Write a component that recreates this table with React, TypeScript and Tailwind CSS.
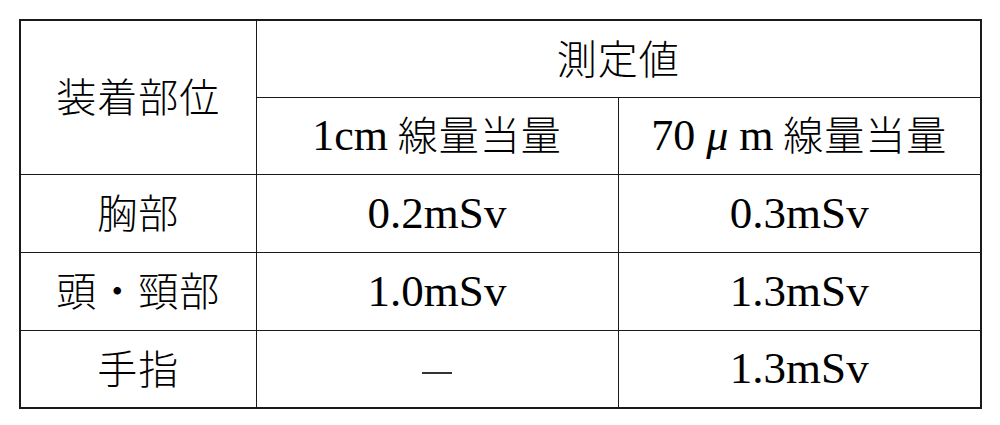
const serif = "font-['Liberation_Serif','Noto_Sans_CJK_JP',serif]";
const jp = "font-['Noto_Sans_CJK_JP',sans-serif] font-light tracking-[1px]";

const rows = [
  { part: "胸部", cm: "0.2mSv", um: "0.3mSv" },
  { part: "頭・頸部", cm: "1.0mSv", um: "1.3mSv" },
  { part: "手指", cm: "", um: "1.3mSv" },
];

export default function App() {
  const cell = "border-[1.5px] border-[#1a1a1a] text-center align-middle p-0 font-normal";
  return (
    <div className={`w-[1000px] h-[425px] bg-white pt-[19px] pl-[19px] text-black ${serif}`}>
      <table className="border-collapse border-2 border-[#1a1a1a] table-fixed w-[961px] text-[40px] leading-none">
        <colgroup>
          <col className="w-[236px]" />
          <col className="w-[362px]" />
          <col className="w-[363px]" />
        </colgroup>
        <thead>
          <tr className="h-[77px]">
            <th rowSpan={2} className={cell}>
              <span className={jp}>装着部位</span>
            </th>
            <th colSpan={2} className={cell}>
              <span className={jp}>測定値</span>
            </th>
          </tr>
          <tr className="h-[77px]">
            <th className={cell}>
              <span className="text-[44px]">1cm</span>
              <span className={jp}> 線量当量</span>
            </th>
            <th className={cell}>
              <span className="text-[44px]">70</span>
              <span className="text-[44px] italic"> μ </span>
              <span className="text-[44px]">m</span>
              <span className={jp}> 線量当量</span>
            </th>
          </tr>
        </thead>
        <tbody>
          {rows.map((r) => (
            <tr key={r.part} className="h-[78px]">
              <td className={cell}>
                <span className={jp}>{r.part}</span>
              </td>
              <td className={`${cell} text-[45px]`}>
                {r.cm ? r.cm : <span className="inline-block align-middle w-[30px] h-[2px] bg-[#333]" />}
              </td>
              <td className={`${cell} text-[45px]`}>{r.um}</td>
            </tr>
          ))}
        </tbody>
      </table>
    </div>
  );
}
